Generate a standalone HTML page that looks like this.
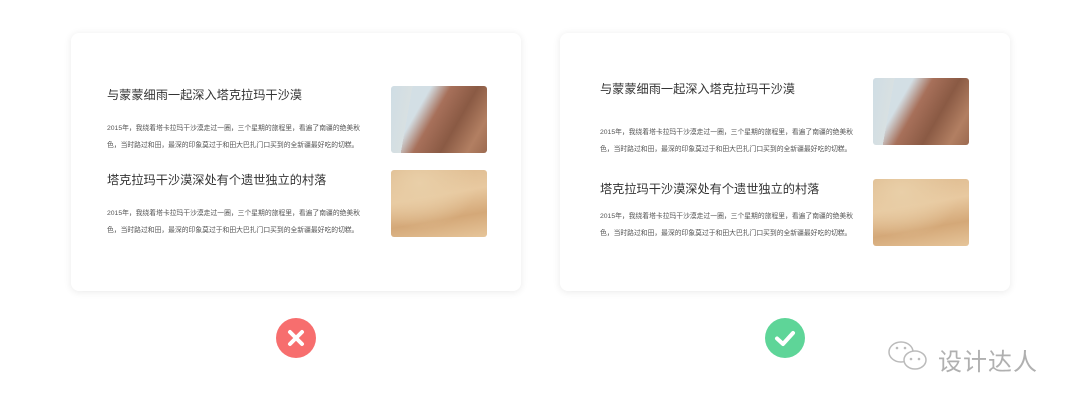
<!DOCTYPE html><html><head><meta charset="utf-8"><style>
body{margin:0;width:1080px;height:405px;background:#fff;position:relative;overflow:hidden;font-family:"Liberation Sans","Noto Sans CJK SC",sans-serif}
.card{position:absolute;top:33px;width:450px;height:258px;background:#fff;border-radius:8px;box-shadow:0 1px 8px rgba(0,0,0,.09)}
.t{position:absolute;font-size:12.2px;color:#333;white-space:nowrap}
.b{position:absolute;font-size:6.8px;color:#555;line-height:17px;white-space:nowrap}
.img{position:absolute;width:96px;height:67px;border-radius:3px;overflow:hidden}
.rock{background:linear-gradient(100deg,#cfdde4 0%,#d8e0e2 20%,transparent 20%),linear-gradient(120deg,#d3dfe5 30%,#a7705a 45%,#8a5a44 65%,#b27f62 85%,#9c6a50 100%)}
.sand{background:radial-gradient(ellipse at 30% 20%,#e9cfa8,transparent 60%),linear-gradient(170deg,#dcb88c 0%,#e8c9a0 40%,#d4a878 70%,#e6c59a 100%)}
.ic{position:absolute;top:318px;width:40px;height:40px;border-radius:50%}
</style></head><body>
<div class="card" style="left:71px">
<div class="t" style="left:36px;top:52px">与蒙蒙细雨一起深入塔克拉玛干沙漠</div>
<div class="b" style="left:36px;top:87px">2015年，我绕着塔卡拉玛干沙漠走过一圈，三个星期的旅程里，看遍了南疆的绝美秋<br>色，当时路过和田，最深的印象莫过于和田大巴扎门口买到的全新疆最好吃的切糕。</div>
<div class="img rock" style="left:320px;top:53px"></div>
<div class="t" style="left:36px;top:137px">塔克拉玛干沙漠深处有个遗世独立的村落</div>
<div class="b" style="left:36px;top:172px">2015年，我绕着塔卡拉玛干沙漠走过一圈，三个星期的旅程里，看遍了南疆的绝美秋<br>色，当时路过和田，最深的印象莫过于和田大巴扎门口买到的全新疆最好吃的切糕。</div>
<div class="img sand" style="left:320px;top:137px"></div>
</div>
<div class="card" style="left:560px">
<div class="t" style="left:40px;top:46px">与蒙蒙细雨一起深入塔克拉玛干沙漠</div>
<div class="b" style="left:40px;top:91px">2015年，我绕着塔卡拉玛干沙漠走过一圈，三个星期的旅程里，看遍了南疆的绝美秋<br>色，当时路过和田，最深的印象莫过于和田大巴扎门口买到的全新疆最好吃的切糕。</div>
<div class="img rock" style="left:313px;top:45px"></div>
<div class="t" style="left:40px;top:146px">塔克拉玛干沙漠深处有个遗世独立的村落</div>
<div class="b" style="left:40px;top:175px">2015年，我绕着塔卡拉玛干沙漠走过一圈，三个星期的旅程里，看遍了南疆的绝美秋<br>色，当时路过和田，最深的印象莫过于和田大巴扎门口买到的全新疆最好吃的切糕。</div>
<div class="img sand" style="left:313px;top:146px"></div>
</div>
<div class="ic" style="left:276px;background:#f76e6e"><svg width="40" height="40"><path d="M14 14L26 26M26 14L14 26" stroke="#fff" stroke-width="4" stroke-linecap="round"/></svg></div>
<div class="ic" style="left:765px;background:#5ed598"><svg width="40" height="40"><path d="M12 20.5L18 26L28 15" stroke="#fff" stroke-width="4" fill="none" stroke-linecap="round" stroke-linejoin="round"/></svg></div>
<svg style="position:absolute;left:885px;top:340px" width="50" height="34"><ellipse cx="16" cy="12" rx="12" ry="10" fill="none" stroke="#bbb" stroke-width="1.5"/><ellipse cx="30" cy="20" rx="11" ry="9" fill="#fff" stroke="#bbb" stroke-width="1.5"/><circle cx="26" cy="19" r="1.3" fill="#bbb"/><circle cx="34" cy="19" r="1.3" fill="#bbb"/><circle cx="12" cy="8" r="1.3" fill="#bbb"/><circle cx="20" cy="8" r="1.3" fill="#bbb"/></svg>
<div style="position:absolute;left:938px;top:342px;font-size:24px;color:#b0b0b0;letter-spacing:1px;white-space:nowrap">设计达人</div>
</body></html>
